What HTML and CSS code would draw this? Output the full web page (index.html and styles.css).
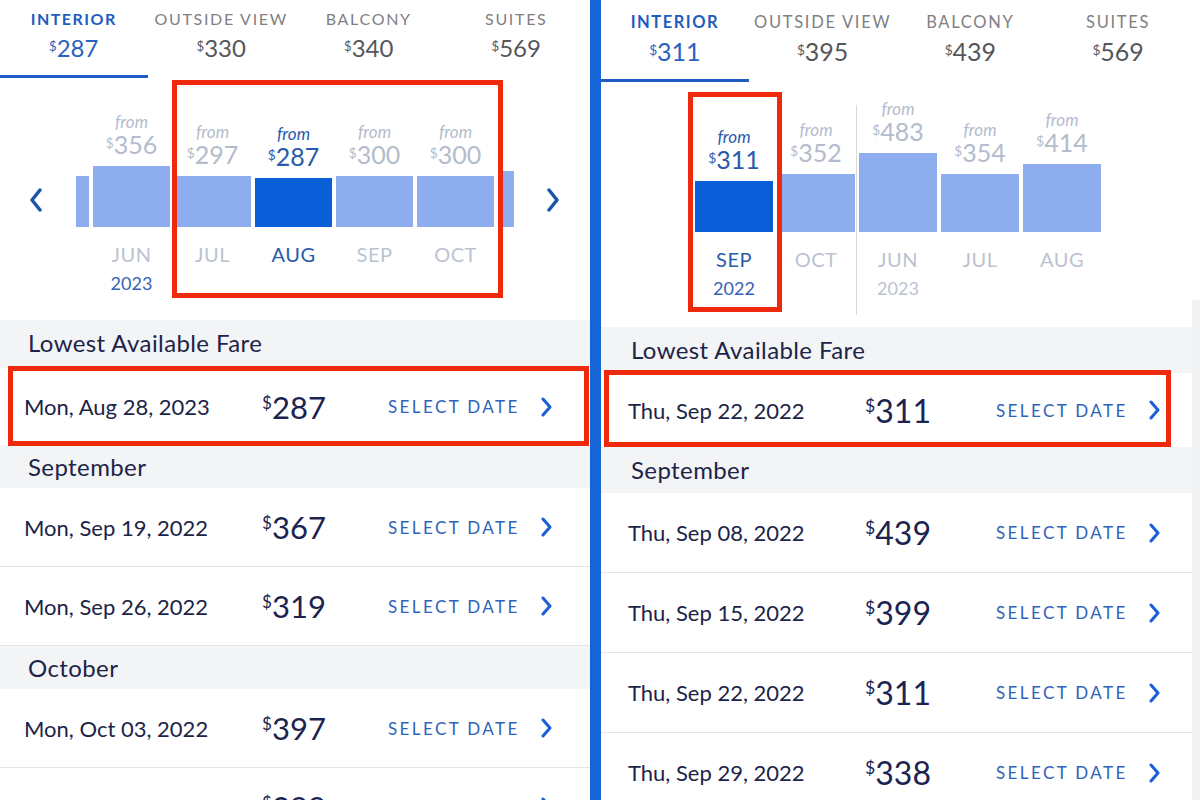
FILE: index.html
```html
<!DOCTYPE html>
<html>
<head>
    <title>Cruise Fares</title>
    <link rel="stylesheet" href="styles.css">
</head>
<body>
<div class="screen">
    <section class="panel panel-left">
        <nav class="tabs">
            <div class="tab active"><span class="tab-name">Interior</span><span class="tab-price"><span class="cur">$</span>287</span></div>
            <div class="tab"><span class="tab-name">Outside View</span><span class="tab-price"><span class="cur">$</span>330</span></div>
            <div class="tab"><span class="tab-name">Balcony</span><span class="tab-price"><span class="cur">$</span>340</span></div>
            <div class="tab"><span class="tab-name">Suites</span><span class="tab-price"><span class="cur">$</span>569</span></div>
        </nav>

        <div class="chart">
            <button class="chart-nav nav-prev">
                <svg width="14" height="24" viewBox="0 0 14 24"><path d="M11 2 L3 12 L11 22" fill="none" stroke="#1d52ad" stroke-width="3.5" stroke-linecap="round" stroke-linejoin="round"/></svg>
            </button>
            <div class="chart-view">
                <div class="chart-track">
                    <!-- edges of the neighbouring months, clipped by the view -->
                    <div class="month">
                        <div class="month-top"><div class="bar" style="height:51px"></div></div>
                    </div>
                    <div class="month">
                        <div class="month-top">
                            <span class="from">from</span>
                            <span class="amt"><span class="cur">$</span>356</span>
                            <div class="bar" style="height:61px"></div>
                        </div>
                        <div class="month-name">JUN</div>
                        <div class="month-year">2023</div>
                    </div>
                    <div class="month">
                        <div class="month-top">
                            <span class="from">from</span>
                            <span class="amt"><span class="cur">$</span>297</span>
                            <div class="bar" style="height:51px"></div>
                        </div>
                        <div class="month-name">JUL</div>
                    </div>
                    <div class="month selected">
                        <div class="month-top">
                            <span class="from">from</span>
                            <span class="amt"><span class="cur">$</span>287</span>
                            <div class="bar" style="height:49px"></div>
                        </div>
                        <div class="month-name">AUG</div>
                    </div>
                    <div class="month">
                        <div class="month-top">
                            <span class="from">from</span>
                            <span class="amt"><span class="cur">$</span>300</span>
                            <div class="bar" style="height:51px"></div>
                        </div>
                        <div class="month-name">SEP</div>
                    </div>
                    <div class="month">
                        <div class="month-top">
                            <span class="from">from</span>
                            <span class="amt"><span class="cur">$</span>300</span>
                            <div class="bar" style="height:51px"></div>
                        </div>
                        <div class="month-name">OCT</div>
                    </div>
                    <div class="month">
                        <div class="month-top"><div class="bar" style="height:56px"></div></div>
                    </div>
                </div>
            </div>
            <button class="chart-nav nav-next">
                <svg width="14" height="24" viewBox="0 0 14 24"><path d="M3 2 L11 12 L3 22" fill="none" stroke="#1d52ad" stroke-width="3.5" stroke-linecap="round" stroke-linejoin="round"/></svg>
            </button>
            <div class="callout callout-months"></div>
        </div>

        <div class="fares">
            <div class="fare-group first">Lowest Available Fare</div>
            <div class="fare-row marked">
                <span class="fare-date">Mon, Aug 28, 2023</span>
                <span class="fare-price"><span class="cur">$</span>287</span>
                <a class="fare-select">SELECT DATE <svg width="12" height="20" viewBox="0 0 12 20"><path d="M3 2 L10 10 L3 18" fill="none" stroke="#1a5fd6" stroke-width="3" stroke-linecap="round" stroke-linejoin="round"/></svg></a>
            </div>
            <div class="fare-group">September</div>
            <div class="fare-row">
                <span class="fare-date">Mon, Sep 19, 2022</span>
                <span class="fare-price"><span class="cur">$</span>367</span>
                <a class="fare-select">SELECT DATE <svg width="12" height="20" viewBox="0 0 12 20"><path d="M3 2 L10 10 L3 18" fill="none" stroke="#1a5fd6" stroke-width="3" stroke-linecap="round" stroke-linejoin="round"/></svg></a>
            </div>
            <div class="fare-row">
                <span class="fare-date">Mon, Sep 26, 2022</span>
                <span class="fare-price"><span class="cur">$</span>319</span>
                <a class="fare-select">SELECT DATE <svg width="12" height="20" viewBox="0 0 12 20"><path d="M3 2 L10 10 L3 18" fill="none" stroke="#1a5fd6" stroke-width="3" stroke-linecap="round" stroke-linejoin="round"/></svg></a>
            </div>
            <div class="fare-group">October</div>
            <div class="fare-row">
                <span class="fare-date">Mon, Oct 03, 2022</span>
                <span class="fare-price"><span class="cur">$</span>397</span>
                <a class="fare-select">SELECT DATE <svg width="12" height="20" viewBox="0 0 12 20"><path d="M3 2 L10 10 L3 18" fill="none" stroke="#1a5fd6" stroke-width="3" stroke-linecap="round" stroke-linejoin="round"/></svg></a>
            </div>
            <div class="fare-row">
                <span class="fare-date">Mon, Oct 10, 2022</span>
                <span class="fare-price"><span class="cur">$</span>288</span>
                <a class="fare-select">SELECT DATE <svg width="12" height="20" viewBox="0 0 12 20"><path d="M3 2 L10 10 L3 18" fill="none" stroke="#1a5fd6" stroke-width="3" stroke-linecap="round" stroke-linejoin="round"/></svg></a>
            </div>
        </div>
    </section>

    <div class="divider"></div>

    <section class="panel panel-right">
        <nav class="tabs">
            <div class="tab active"><span class="tab-name">Interior</span><span class="tab-price"><span class="cur">$</span>311</span></div>
            <div class="tab"><span class="tab-name">Outside View</span><span class="tab-price"><span class="cur">$</span>395</span></div>
            <div class="tab"><span class="tab-name">Balcony</span><span class="tab-price"><span class="cur">$</span>439</span></div>
            <div class="tab"><span class="tab-name">Suites</span><span class="tab-price"><span class="cur">$</span>569</span></div>
        </nav>

        <div class="chart">
            <div class="chart-view">
                <div class="chart-track">
                    <div class="month selected">
                        <div class="month-top">
                            <span class="from">from</span>
                            <span class="amt"><span class="cur">$</span>311</span>
                            <div class="bar" style="height:51px"></div>
                        </div>
                        <div class="month-name">SEP</div>
                        <div class="month-year">2022</div>
                    </div>
                    <div class="month">
                        <div class="month-top">
                            <span class="from">from</span>
                            <span class="amt"><span class="cur">$</span>352</span>
                            <div class="bar" style="height:58px"></div>
                        </div>
                        <div class="month-name">OCT</div>
                    </div>
                    <div class="month year-start">
                        <div class="month-top">
                            <span class="from">from</span>
                            <span class="amt"><span class="cur">$</span>483</span>
                            <div class="bar" style="height:79px"></div>
                        </div>
                        <div class="month-name">JUN</div>
                        <div class="month-year">2023</div>
                    </div>
                    <div class="month">
                        <div class="month-top">
                            <span class="from">from</span>
                            <span class="amt"><span class="cur">$</span>354</span>
                            <div class="bar" style="height:58px"></div>
                        </div>
                        <div class="month-name">JUL</div>
                    </div>
                    <div class="month">
                        <div class="month-top">
                            <span class="from">from</span>
                            <span class="amt"><span class="cur">$</span>414</span>
                            <div class="bar" style="height:68px"></div>
                        </div>
                        <div class="month-name">AUG</div>
                    </div>
                </div>
            </div>
            <div class="callout callout-month"></div>
        </div>

        <div class="fares">
            <div class="fare-group first">Lowest Available Fare</div>
            <div class="fare-row marked">
                <span class="fare-date">Thu, Sep 22, 2022</span>
                <span class="fare-price"><span class="cur">$</span>311</span>
                <a class="fare-select">SELECT DATE <svg width="12" height="20" viewBox="0 0 12 20"><path d="M3 2 L10 10 L3 18" fill="none" stroke="#1a5fd6" stroke-width="3" stroke-linecap="round" stroke-linejoin="round"/></svg></a>
            </div>
            <div class="fare-group">September</div>
            <div class="fare-row">
                <span class="fare-date">Thu, Sep 08, 2022</span>
                <span class="fare-price"><span class="cur">$</span>439</span>
                <a class="fare-select">SELECT DATE <svg width="12" height="20" viewBox="0 0 12 20"><path d="M3 2 L10 10 L3 18" fill="none" stroke="#1a5fd6" stroke-width="3" stroke-linecap="round" stroke-linejoin="round"/></svg></a>
            </div>
            <div class="fare-row">
                <span class="fare-date">Thu, Sep 15, 2022</span>
                <span class="fare-price"><span class="cur">$</span>399</span>
                <a class="fare-select">SELECT DATE <svg width="12" height="20" viewBox="0 0 12 20"><path d="M3 2 L10 10 L3 18" fill="none" stroke="#1a5fd6" stroke-width="3" stroke-linecap="round" stroke-linejoin="round"/></svg></a>
            </div>
            <div class="fare-row">
                <span class="fare-date">Thu, Sep 22, 2022</span>
                <span class="fare-price"><span class="cur">$</span>311</span>
                <a class="fare-select">SELECT DATE <svg width="12" height="20" viewBox="0 0 12 20"><path d="M3 2 L10 10 L3 18" fill="none" stroke="#1a5fd6" stroke-width="3" stroke-linecap="round" stroke-linejoin="round"/></svg></a>
            </div>
            <div class="fare-row">
                <span class="fare-date">Thu, Sep 29, 2022</span>
                <span class="fare-price"><span class="cur">$</span>338</span>
                <a class="fare-select">SELECT DATE <svg width="12" height="20" viewBox="0 0 12 20"><path d="M3 2 L10 10 L3 18" fill="none" stroke="#1a5fd6" stroke-width="3" stroke-linecap="round" stroke-linejoin="round"/></svg></a>
            </div>
        </div>
    </section>
    <div class="edge"></div>
</div>
</body>
</html>
```

FILE: styles.css
```css
body {
    margin: 0;
    background: #fff;
    font-family: Lato, "Open Sans", sans-serif;
    color: #1c2447;
}
.screen {
    display: flex;
    width: 1200px;
    height: 800px;
    overflow: hidden;
}
.panel {
    width: 590px;
    flex-shrink: 0;
    display: flex;
    flex-direction: column;
}
.panel-right {
    width: 591px;
}
.divider {
    width: 11px;
    flex-shrink: 0;
    background: #1565d6;
}
.edge {
    flex: 1;
    background: linear-gradient(#fff 300px, #f1f2f4 300px);
}

/* cabin tabs */
.tabs {
    flex-shrink: 0;
    display: grid;
    grid-template-columns: repeat(4, 1fr);
    height: 78px;
}
.panel-right .tabs {
    height: 82px;
}
.tab {
    display: flex;
    flex-direction: column;
    align-items: center;
    padding-top: 9px;
    box-sizing: border-box;
    border-bottom: 3px solid transparent;
}
.panel-right .tab {
    padding-top: 12px;
}
.tab-name {
    font-size: 16px;
    line-height: 20px;
    letter-spacing: 1.7px;
    text-transform: uppercase;
    color: #7f8083;
}
.tab-price {
    margin-top: 3px;
    font-size: 24px;
    line-height: 28px;
    color: #56575b;
}
.panel-right .tab-name {
    font-size: 16.5px;
}
.panel-right .tab-price {
    margin-top: 4px;
    font-size: 25px;
}
.tab.active {
    border-bottom-color: #1d5cc2;
}
.tab.active .tab-name {
    font-weight: 700;
    letter-spacing: 1.5px;
    color: #1f5dbd;
}
.tab.active .tab-price {
    color: #2a62c0;
}
.cur {
    font-size: 0.55em;
    vertical-align: 0.45em;
}

/* month chart */
.chart {
    flex-shrink: 0;
    position: relative;
    display: flex;
    height: 242px;
}
.panel-right .chart {
    height: 245px;
    padding-left: 94px;
}
.chart-nav {
    width: 76px;
    height: 24px;
    margin-top: 110px;
    padding: 0 0 0 29px;
    border: none;
    background: none;
    display: flex;
    align-items: center;
}
.nav-next {
    padding-left: 32px;
}
.chart-view {
    width: 438px;
    overflow: hidden;
}
.panel-right .chart-view {
    width: 420px;
    overflow: visible;
}
.chart-track {
    display: flex;
    gap: 4px;
    margin-left: -64px;
}
.panel-right .chart-track {
    margin-left: 0;
}
.month {
    position: relative;
    width: 77px;
    flex-shrink: 0;
    display: flex;
    flex-direction: column;
    align-items: center;
}
.panel-right .month {
    width: 78px;
}
.month-top {
    height: 149px;
    width: 100%;
    display: flex;
    flex-direction: column;
    justify-content: flex-end;
    align-items: center;
}
.panel-right .month-top {
    height: 150px;
}
.from {
    font-size: 17px;
    line-height: 18px;
    font-style: italic;
    color: #b3bccc;
}
.amt {
    font-size: 25px;
    line-height: 24px;
    margin-bottom: 10px;
    color: #b3bccc;
}
.bar {
    width: 100%;
    background: #8eadee;
}
.month-name {
    margin-top: 16px;
    font-size: 20px;
    line-height: 22px;
    letter-spacing: 0.5px;
    color: #bcc3d0;
}
.month-year {
    margin-top: 7px;
    font-size: 18px;
    line-height: 22px;
    color: #bcc3d0;
}
.panel-left .month-year,
.month.selected .month-year {
    color: #3563b3;
}
.month.selected .from,
.month.selected .amt,
.month.selected .month-name {
    color: #2a5bab;
}
.month.selected .bar {
    background: #0a5ed8;
}
.year-start::before {
    content: "";
    position: absolute;
    left: -3px;
    top: 23px;
    height: 210px;
    border-left: 1px solid #d6d9de;
}

/* red highlight boxes */
.callout {
    position: absolute;
    border: 5px solid #ef2a0c;
    box-sizing: border-box;
}
.callout-months {
    left: 172px;
    top: 2px;
    width: 331px;
    height: 218px;
}
.callout-month {
    left: 87px;
    top: 10px;
    width: 94px;
    height: 220px;
}

/* fare list */
.fares {
    flex: 1;
}
.fare-group {
    background: #f3f4f6;
    height: 43px;
    padding-left: 28px;
    font-size: 24px;
    letter-spacing: 0.4px;
    line-height: 43px;
}
.fare-group.first {
    height: 48px;
    line-height: 46px;
}
.panel-right .fare-group {
    height: 46px;
    line-height: 46px;
    padding-left: 30px;
}
.fare-row {
    position: relative;
    display: grid;
    grid-template-columns: 210px 120px 1fr;
    align-items: center;
    height: 79px;
    padding-left: 24px;
    border-bottom: 1px solid #e3e5e9;
    box-sizing: border-box;
}
.fare-row.marked {
    height: 77px;
    border-bottom: none;
}
.panel-right .fare-row {
    height: 80px;
    padding-left: 27px;
}
.panel-right .fare-row.marked {
    height: 74px;
}
.fare-row.marked::after {
    content: "";
    position: absolute;
    left: 8px;
    right: 1px;
    top: -2px;
    bottom: -1px;
    border: 5px solid #ef2a0c;
}
.panel-right .fare-row.marked::after {
    left: 3px;
    right: 21px;
    top: -3px;
    bottom: 0;
}
.fare-date {
    font-size: 22px;
}
.fare-price {
    text-align: center;
    font-size: 31px;
    color: #1c2350;
}
.panel-right .fare-price {
    font-size: 32px;
}
.fare-price .cur {
    font-size: 0.55em;
    vertical-align: 0.6em;
}
.fare-select {
    display: flex;
    align-items: center;
    gap: 20px;
    padding-left: 34px;
    font-size: 17px;
    letter-spacing: 2.4px;
    color: #2f63b8;
}
.panel-right .fare-select {
    padding-left: 38px;
}
```
